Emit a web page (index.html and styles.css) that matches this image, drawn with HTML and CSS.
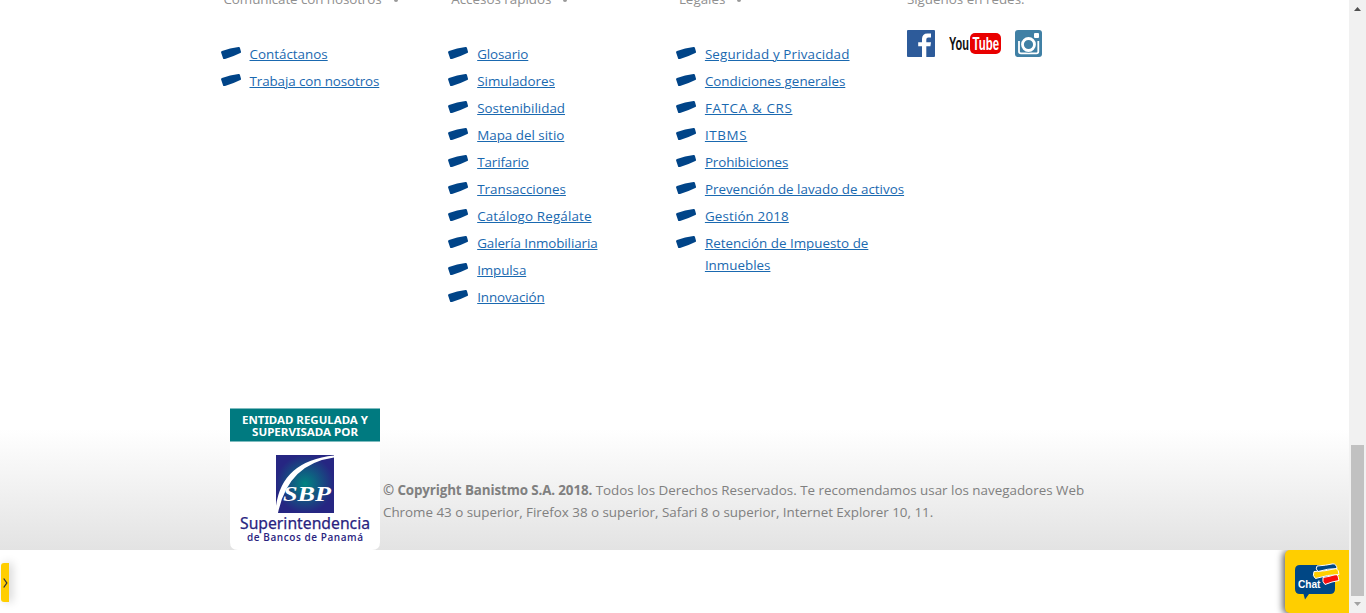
FILE: index.html
```html
<!DOCTYPE html>
<html lang="es">
<head>
<meta charset="utf-8">
<title>Banistmo</title>
<link rel="stylesheet" href="styles.css">
</head>
<body>
<svg width="0" height="0" class="defs">
  <symbol id="mark" viewBox="0 0 20 12"><path d="M1 4Q9 1.200 17.500 0Q18.600 -.1 18.900 .8L20 4.800Q20.100 5.700 19.300 6.100Q13 9.400 4 11.900Q2.500 12.300 2.100 11.400L.1 5.400Q-.1 4.400 1 4Z" fill="#004488"/></symbol>
</svg>
<div class="shell">
  <main class="page">
    <div class="columns">
      <section class="col">
        <h2>Comunícate con nosotros <i class="dot"></i></h2>
        <ul>
          <li><svg><use href="#mark"/></svg><a class="open" href="#">Contáctanos</a></li>
          <li><svg><use href="#mark"/></svg><a href="#">Trabaja con nosotros</a></li>
        </ul>
      </section>
      <section class="col">
        <h2>Accesos rápidos <i class="dot"></i></h2>
        <ul>
          <li><svg><use href="#mark"/></svg><a href="#">Glosario</a></li>
          <li><svg><use href="#mark"/></svg><a class="open" href="#">Simuladores</a></li>
          <li><svg><use href="#mark"/></svg><a class="open" href="#">Sostenibilidad</a></li>
          <li><svg><use href="#mark"/></svg><a class="open" href="#">Mapa del sitio</a></li>
          <li><svg><use href="#mark"/></svg><a href="#">Tarifario</a></li>
          <li><svg><use href="#mark"/></svg><a class="open" href="#">Transacciones</a></li>
          <li><svg><use href="#mark"/></svg><a class="wide" href="#">Catálogo Regálate</a></li>
          <li><svg><use href="#mark"/></svg><a href="#">Galería Inmobiliaria</a></li>
          <li><svg><use href="#mark"/></svg><a href="#">Impulsa</a></li>
          <li><svg><use href="#mark"/></svg><a href="#">Innovación</a></li>
        </ul>
      </section>
      <section class="col">
        <h2>Legales <i class="dot"></i></h2>
        <ul>
          <li><svg><use href="#mark"/></svg><a class="wide" href="#">Seguridad y Privacidad</a></li>
          <li><svg><use href="#mark"/></svg><a class="open" href="#">Condiciones generales</a></li>
          <li><svg><use href="#mark"/></svg><a class="caps" href="#">FATCA &amp; CRS</a></li>
          <li><svg><use href="#mark"/></svg><a class="caps" href="#">ITBMS</a></li>
          <li><svg><use href="#mark"/></svg><a href="#">Prohibiciones</a></li>
          <li><svg><use href="#mark"/></svg><a class="open" href="#">Prevención de lavado de activos</a></li>
          <li><svg><use href="#mark"/></svg><a class="wide" href="#">Gestión 2018</a></li>
          <li><svg><use href="#mark"/></svg><a class="open" href="#">Retención de Impuesto de<br>Inmuebles</a></li>
        </ul>
      </section>
      <section class="col">
        <h2>Síguenos en redes:</h2>
        <div class="social">
          <svg width="28" height="27" viewBox="0 0 28 27"><rect width="28" height="27" rx="1" fill="#2d5b9a"/><path d="M15 27V16.2H11.2V12.2H15V9Q15 3.4 20.5 3.4H24V7.4H21.2Q19.3 7.4 19.3 9.4V12.2H24L23.4 16.2H19.3V27Z" fill="#fff"/></svg>
          <svg class="yt" width="53" height="27" viewBox="0 0 53 27"><rect x="21" y="3" width="31" height="21" rx="5" fill="#e90000"/><text x="0" y="20" textLength="20" lengthAdjust="spacingAndGlyphs" fill="#111">You</text><text x="23.500" y="20" textLength="26.500" lengthAdjust="spacingAndGlyphs" fill="#fff">Tube</text></svg>
          <svg width="27" height="27" viewBox="0 0 27 27"><rect width="27" height="27" rx="3" fill="#4080a5"/><path d="M4 11V21.500Q4 23.300 6 23.300H21.500Q23.300 23.300 23.300 21.500V11" fill="none" stroke="#fff" stroke-width="1.800"/><circle cx="13.500" cy="14.500" r="8" fill="#4080a5"/><circle cx="13.500" cy="14.500" r="6" fill="#4080a5" stroke="#fff" stroke-width="2.800"/><rect x="19" y="3" width="5" height="5" rx="1" fill="#fff"/></svg>
        </div>
      </section>
    </div>
    <footer class="legal">
      <svg class="seal" width="150" height="142" viewBox="0 0 150 142">
        <defs><radialGradient id="glow"><stop offset="0" stop-color="#008481"/><stop offset="1" stop-color="#262682"/></radialGradient></defs>
        <path d="M0 0H150V134Q150 142 142 142H8Q0 142 0 134Z" fill="#fff"/>
        <path d="M0 .5H150V33.500H0Z" fill="#007a80"/>
        <g class="seal-head" fill="#fff">
          <text x="12" y="15.500" textLength="126" lengthAdjust="spacingAndGlyphs">ENTIDAD REGULADA Y</text>
          <text x="22" y="27.500" textLength="106" lengthAdjust="spacingAndGlyphs">SUPERVISADA POR</text>
        </g>
        <rect x="46" y="47" width="58" height="58" fill="url(#glow)"/>
        <path d="M46 98Q52 53 104 47.500V49.500Q58 56 48 105H46Z" fill="#fff"/>
        <text class="sbp" x="53" y="93" textLength="48" lengthAdjust="spacingAndGlyphs" fill="#fff">SBP</text>
        <text class="seal-name" x="10" y="121" textLength="130" lengthAdjust="spacingAndGlyphs" fill="#29237f">Superintendencia</text>
        <text class="seal-sub" x="17" y="133" textLength="116" fill="#29237f">de Bancos de Panamá</text>
      </svg>
      <p><span class="line"><b>© Copyright Banistmo S.A. 2018.</b> <span>Todos los Derechos Reservados. Te recomendamos usar los navegadores Web</span></span><span class="line two">Chrome 43 o superior, Firefox 38 o superior, Safari 8 o superior, Internet Explorer 10, 11.</span></p>
    </footer>
    <div class="widgets">
      <div class="tab"><svg width="5" height="10" viewBox="0 0 5 10"><path d="M.7 .5L3.800 5L.7 9.500" fill="none" stroke="#333" stroke-width="1.300"/></svg></div>
      <div class="chat">
        <svg width="45" height="37" viewBox="0 0 45 37"><path d="M5 2H36Q40 2 40 7V26Q40 31 35 31H14L10 36.500L8.500 31H5Q0 31 0 26V7Q0 2 5 2Z" fill="#004785"/><path d="M28 14.500Q36 13.500 41 11Q43.500 12 44 17.500Q37 18.500 30 21.500Q27 19 28 14.500Z" fill="#f80d0d" stroke="#fff" stroke-width="1"/><path d="M19 8.500Q30 8.500 41 5.500Q44 7 44 11.500Q33 11.500 20.500 15.500Q17 13 19 8.500Z" fill="#ffce00" stroke="#fff" stroke-width="1"/><path d="M22 3Q31 2.500 38 .8Q41.500 1 42 5.500Q33 5.500 23 8.500Q20 6 22 3Z" fill="#004785" stroke="#fff" stroke-width="1"/><text x="3" y="25" textLength="22.500" lengthAdjust="spacingAndGlyphs" fill="#fff">Chat</text></svg>
      </div>
    </div>
  </main>
  <aside class="scroll">
    <svg width="7" height="4" viewBox="0 0 7 4"><path d="M3.500 0L7 4H0Z" fill="#505050"/></svg>
    <div class="thumb"></div>
    <svg width="7" height="4" viewBox="0 0 7 4"><path d="M0 0H7L3.500 4Z" fill="#a3a3a3"/></svg>
  </aside>
</div>
</body>
</html>
```
FILE: styles.css
```css
* { box-sizing: border-box; }
body { margin: 0; overflow: hidden; background: #fff; font: 13.400px/22px "Open Sans", "Noto Sans", sans-serif; color: #808080; }
.defs { display: block; }
.shell { display: flex; height: 613px; }
.page { width: 1349px; display: flex; flex-direction: column; }
.columns { display: grid; grid-template-columns: 227.700px 227.700px 231px 240px; padding-left: 220.500px; height: 408px; overflow: hidden; }
.col h2 { margin: -12px 0 0 3px; height: 22px; font-size: 13.400px; font-weight: 400; color: #909090; white-space: nowrap; display: flex; align-items: center; gap: 12px; }
.col:first-child h2 { letter-spacing: -.08px; }
.col:last-child h2 { margin-left: 0; }
.dot { width: 4px; height: 4px; border-radius: 50%; background: #999; margin-top: 1px; }
ul { list-style: none; margin: 33px 0 0; padding: 0; display: grid; gap: 5px; }
li { display: flex; gap: 9px; align-items: flex-start; white-space: nowrap; }
li svg { width: 20px; height: 12px; margin-top: 4px; flex: none; }
a { color: #1a69b0; letter-spacing: -.1px; text-underline-offset: 1px; text-decoration-thickness: 1px; }
.open { letter-spacing: 0; }
.wide { letter-spacing: .15px; }
.caps { letter-spacing: .65px; }
.social { display: flex; margin: 20px 0 0; }
.social svg:nth-child(2) { margin: 0 13px 0 14px; }
.yt { font: 700 18px "Liberation Sans", sans-serif; }
.legal { display: flex; height: 142px; padding-left: 230px; gap: 3px; background: linear-gradient(#fff 15%, #e3e3e3); }
.seal { flex: none; }
.seal-head { font: 700 11px "Noto Sans", sans-serif; }
.sbp { font: italic 700 22px "Liberation Serif", serif; }
.seal-name { font: 400 16px "Noto Sans", sans-serif; stroke: #29237f; stroke-width: .25px; }
.seal-sub { font: 600 10px "Open Sans", sans-serif; }
.legal p { margin: 71px 0 0; white-space: nowrap; }
.legal b { letter-spacing: -.12px; }
.line { display: block; }
.two { letter-spacing: -.02px; }
.widgets { display: flex; justify-content: space-between; height: 63px; overflow: hidden; }
.tab { margin: 13px 0 0 1px; width: 8px; height: 39px; border-radius: 3px 0 0 3px; background: #ffce00; box-shadow: 3px 0 10px rgba(0,0,0,.18); display: flex; align-items: center; padding-left: 2px; }
.chat { width: 64px; height: 63px; background: #ffce00; border-radius: 5px 0 0 5px; box-shadow: -2px 1px 7px rgba(0,0,0,.65); padding: 13px 0 0 10px; font: 700 11px "Liberation Sans", sans-serif; }
.scroll { width: 17px; background: #f1f1f1; display: flex; flex-direction: column; align-items: center; padding: 7px 0; }
.thumb { width: 13px; height: 151px; background: #c1c1c1; margin: auto 0 6px; }
```
